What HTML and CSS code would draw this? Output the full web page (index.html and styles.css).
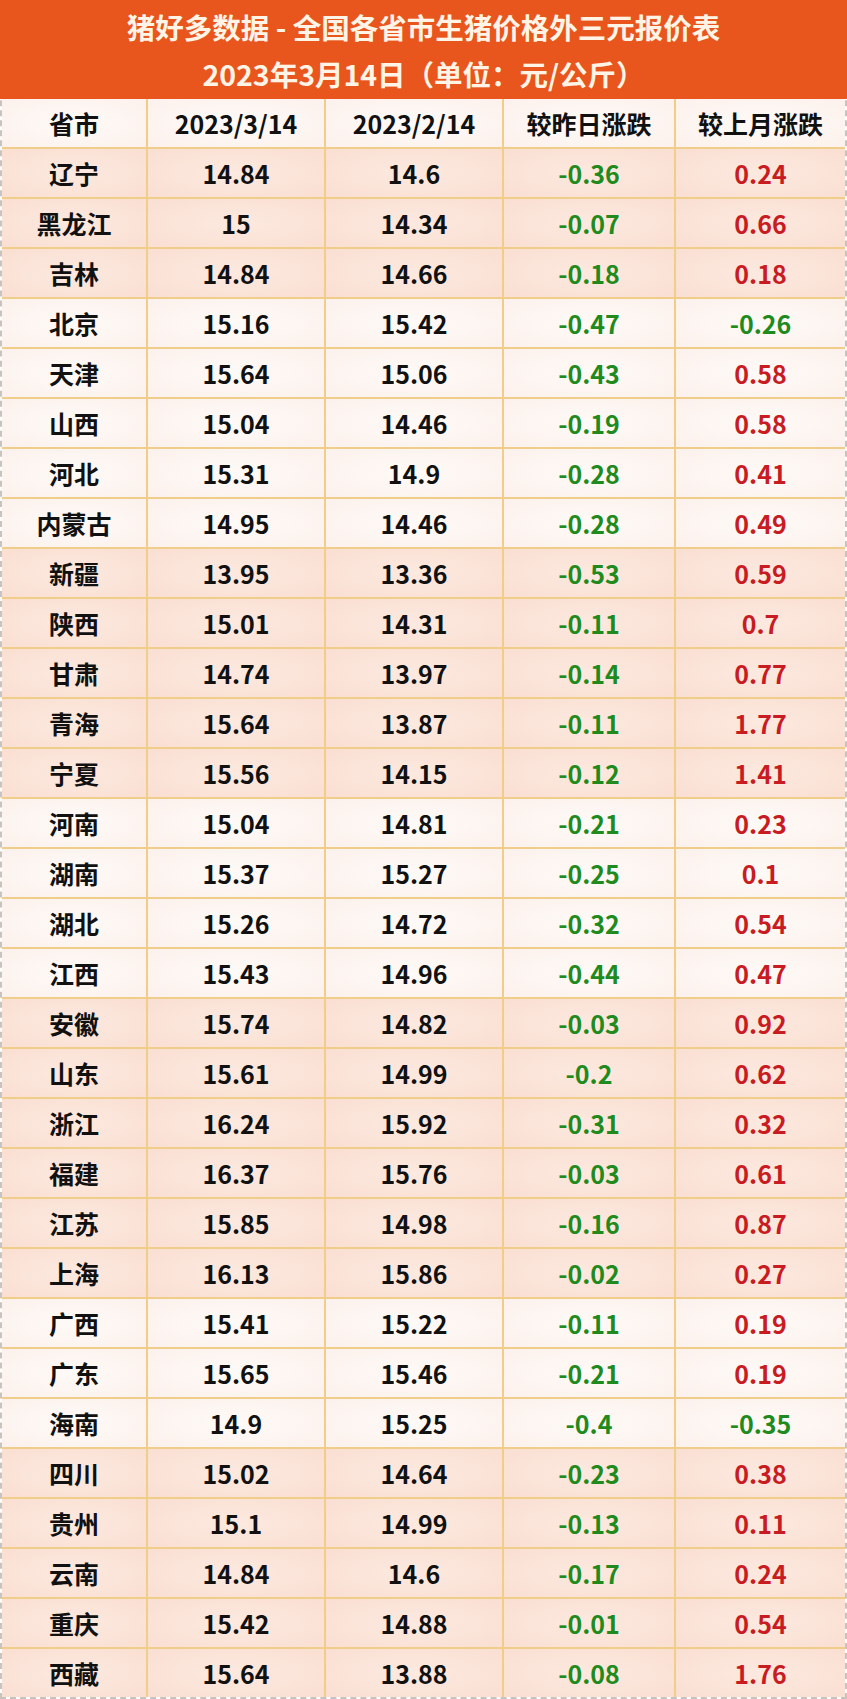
FILE: index.html
```html
<!DOCTYPE html>
<html lang="zh">
<head>
<meta charset="utf-8">
<title>猪好多数据</title>
<link rel="stylesheet" href="styles.css">
</head>
<body>
<div class="page">
  <div class="banner">
    <div class="banner-line">猪好多数据 - 全国各省市生猪价格外三元报价表</div>
    <div class="banner-line">2023年3月14日（单位：元/公斤）</div>
  </div>
  <div class="table">
    <div class="row head light"><div class="cell">省市</div><div class="cell">2023/3/14</div><div class="cell">2023/2/14</div><div class="cell">较昨日涨跌</div><div class="cell">较上月涨跌</div></div>
    <div class="row pink"><div class="cell">辽宁</div><div class="cell">14.84</div><div class="cell">14.6</div><div class="cell down">-0.36</div><div class="cell up">0.24</div></div>
    <div class="row pink"><div class="cell">黑龙江</div><div class="cell">15</div><div class="cell">14.34</div><div class="cell down">-0.07</div><div class="cell up">0.66</div></div>
    <div class="row pink"><div class="cell">吉林</div><div class="cell">14.84</div><div class="cell">14.66</div><div class="cell down">-0.18</div><div class="cell up">0.18</div></div>
    <div class="row light"><div class="cell">北京</div><div class="cell">15.16</div><div class="cell">15.42</div><div class="cell down">-0.47</div><div class="cell down">-0.26</div></div>
    <div class="row light"><div class="cell">天津</div><div class="cell">15.64</div><div class="cell">15.06</div><div class="cell down">-0.43</div><div class="cell up">0.58</div></div>
    <div class="row light"><div class="cell">山西</div><div class="cell">15.04</div><div class="cell">14.46</div><div class="cell down">-0.19</div><div class="cell up">0.58</div></div>
    <div class="row light"><div class="cell">河北</div><div class="cell">15.31</div><div class="cell">14.9</div><div class="cell down">-0.28</div><div class="cell up">0.41</div></div>
    <div class="row light"><div class="cell">内蒙古</div><div class="cell">14.95</div><div class="cell">14.46</div><div class="cell down">-0.28</div><div class="cell up">0.49</div></div>
    <div class="row pink"><div class="cell">新疆</div><div class="cell">13.95</div><div class="cell">13.36</div><div class="cell down">-0.53</div><div class="cell up">0.59</div></div>
    <div class="row pink"><div class="cell">陕西</div><div class="cell">15.01</div><div class="cell">14.31</div><div class="cell down">-0.11</div><div class="cell up">0.7</div></div>
    <div class="row pink"><div class="cell">甘肃</div><div class="cell">14.74</div><div class="cell">13.97</div><div class="cell down">-0.14</div><div class="cell up">0.77</div></div>
    <div class="row pink"><div class="cell">青海</div><div class="cell">15.64</div><div class="cell">13.87</div><div class="cell down">-0.11</div><div class="cell up">1.77</div></div>
    <div class="row pink"><div class="cell">宁夏</div><div class="cell">15.56</div><div class="cell">14.15</div><div class="cell down">-0.12</div><div class="cell up">1.41</div></div>
    <div class="row light"><div class="cell">河南</div><div class="cell">15.04</div><div class="cell">14.81</div><div class="cell down">-0.21</div><div class="cell up">0.23</div></div>
    <div class="row light"><div class="cell">湖南</div><div class="cell">15.37</div><div class="cell">15.27</div><div class="cell down">-0.25</div><div class="cell up">0.1</div></div>
    <div class="row light"><div class="cell">湖北</div><div class="cell">15.26</div><div class="cell">14.72</div><div class="cell down">-0.32</div><div class="cell up">0.54</div></div>
    <div class="row light"><div class="cell">江西</div><div class="cell">15.43</div><div class="cell">14.96</div><div class="cell down">-0.44</div><div class="cell up">0.47</div></div>
    <div class="row pink"><div class="cell">安徽</div><div class="cell">15.74</div><div class="cell">14.82</div><div class="cell down">-0.03</div><div class="cell up">0.92</div></div>
    <div class="row pink"><div class="cell">山东</div><div class="cell">15.61</div><div class="cell">14.99</div><div class="cell down">-0.2</div><div class="cell up">0.62</div></div>
    <div class="row pink"><div class="cell">浙江</div><div class="cell">16.24</div><div class="cell">15.92</div><div class="cell down">-0.31</div><div class="cell up">0.32</div></div>
    <div class="row pink"><div class="cell">福建</div><div class="cell">16.37</div><div class="cell">15.76</div><div class="cell down">-0.03</div><div class="cell up">0.61</div></div>
    <div class="row pink"><div class="cell">江苏</div><div class="cell">15.85</div><div class="cell">14.98</div><div class="cell down">-0.16</div><div class="cell up">0.87</div></div>
    <div class="row pink"><div class="cell">上海</div><div class="cell">16.13</div><div class="cell">15.86</div><div class="cell down">-0.02</div><div class="cell up">0.27</div></div>
    <div class="row light"><div class="cell">广西</div><div class="cell">15.41</div><div class="cell">15.22</div><div class="cell down">-0.11</div><div class="cell up">0.19</div></div>
    <div class="row light"><div class="cell">广东</div><div class="cell">15.65</div><div class="cell">15.46</div><div class="cell down">-0.21</div><div class="cell up">0.19</div></div>
    <div class="row light"><div class="cell">海南</div><div class="cell">14.9</div><div class="cell">15.25</div><div class="cell down">-0.4</div><div class="cell down">-0.35</div></div>
    <div class="row pink"><div class="cell">四川</div><div class="cell">15.02</div><div class="cell">14.64</div><div class="cell down">-0.23</div><div class="cell up">0.38</div></div>
    <div class="row pink"><div class="cell">贵州</div><div class="cell">15.1</div><div class="cell">14.99</div><div class="cell down">-0.13</div><div class="cell up">0.11</div></div>
    <div class="row pink"><div class="cell">云南</div><div class="cell">14.84</div><div class="cell">14.6</div><div class="cell down">-0.17</div><div class="cell up">0.24</div></div>
    <div class="row pink"><div class="cell">重庆</div><div class="cell">15.42</div><div class="cell">14.88</div><div class="cell down">-0.01</div><div class="cell up">0.54</div></div>
    <div class="row pink last"><div class="cell">西藏</div><div class="cell">15.64</div><div class="cell">13.88</div><div class="cell down">-0.08</div><div class="cell up">1.76</div></div>
  </div>
</div>
</body>
</html>
```
FILE: styles.css
```css
html, body {
  margin: 0;
  padding: 0;
  background: #ffffff;
}

body {
  font-family: "Noto Sans CJK SC", "Noto Sans", "Liberation Sans", sans-serif;
  color: #111111;
}

.page {
  width: 847px;
  box-sizing: border-box;
  border: 2px dashed #c9c3bf;
  border-top: none;
}

.banner {
  height: 99px;
  background: #e8551d;
  margin: 0 -2px;
  display: flex;
  flex-direction: column;
  align-items: center;
  justify-content: center;
  color: #fff4e6;
  font-weight: 700;
  font-size: 28.5px;
  line-height: 47px;
}

.table {
  display: flex;
  flex-direction: column;
}

.row {
  display: grid;
  grid-template-columns: 146px 178px 178px 172px 1fr;
  height: 50px;
  box-sizing: border-box;
  border-bottom: 2px solid #f0cd88;
}

.row.head {
  height: 50px;
}

.row.last {
  border-bottom: none;
  height: 48px;
}

.cell {
  display: flex;
  align-items: center;
  justify-content: center;
  font-weight: 700;
  font-size: 25px;
  line-height: 1;
  border-right: 2px solid #f0cd88;
}

.cell:last-child {
  border-right: none;
}

.row.light .cell {
  background: radial-gradient(ellipse at center, #fefaf7 0%, #fcf1ec 100%);
}

.row.pink .cell {
  background: radial-gradient(ellipse at center, #fce9df 0%, #fadfd2 100%);
}

.down {
  color: #1f8a1d;
}

.up {
  color: #c81b22;
}
```
